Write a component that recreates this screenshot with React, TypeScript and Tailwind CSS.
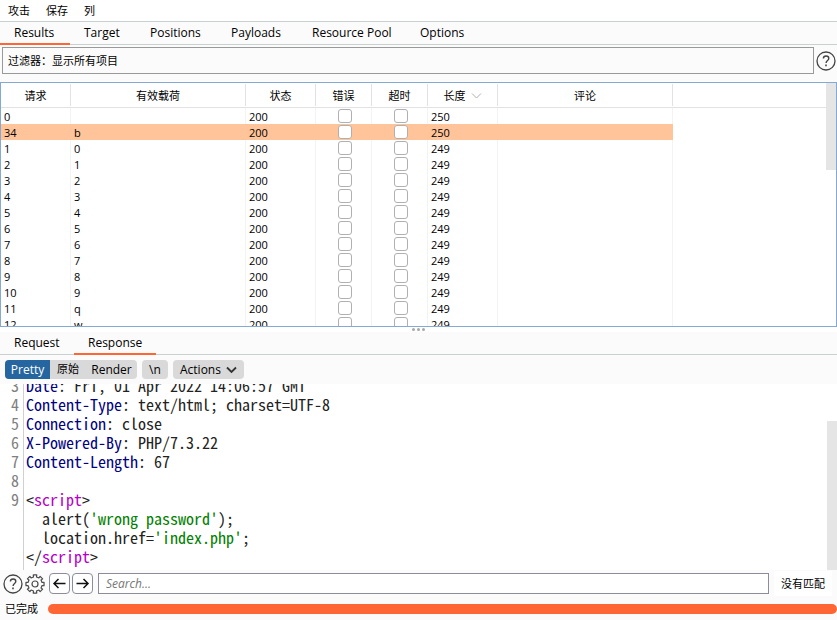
import React from "react";

type Row = { id: string; payload: string; length: string; selected?: boolean };

const rows: Row[] = [
  { id: "0", payload: "", length: "250" },
  { id: "34", payload: "b", length: "250", selected: true },
  { id: "1", payload: "0", length: "249" },
  { id: "2", payload: "1", length: "249" },
  { id: "3", payload: "2", length: "249" },
  { id: "4", payload: "3", length: "249" },
  { id: "5", payload: "4", length: "249" },
  { id: "6", payload: "5", length: "249" },
  { id: "7", payload: "6", length: "249" },
  { id: "8", payload: "7", length: "249" },
  { id: "9", payload: "8", length: "249" },
  { id: "10", payload: "9", length: "249" },
  { id: "11", payload: "q", length: "249" },
  { id: "12", payload: "w", length: "249" },
];

const mainTabs = [
  { label: "Results", width: "w-[70px]" },
  { label: "Target", width: "w-[66px]" },
  { label: "Positions", width: "w-[81px]" },
  { label: "Payloads", width: "w-[81px]" },
  { label: "Resource Pool", width: "w-[108px]" },
  { label: "Options", width: "w-[76px]" },
];

const messageTabs = [
  { label: "Request", width: "w-[74px]" },
  { label: "Response", width: "w-[82px]" },
];

function TabBar({ tabs, active }: { tabs: { label: string; width: string }[]; active: string }) {
  return (
    <div role="tablist" className="flex h-[23px] shrink-0 border-b border-[#c8d0d0] bg-[#fbfbfb] text-xs">
      {tabs.map((t) => (
        <button
          key={t.label}
          role="tab"
          aria-selected={t.label === active}
          className={`${t.width} -mb-px shrink-0 whitespace-nowrap border-b-2 pl-[14px] pt-px text-left leading-5 ${
            t.label === active ? "border-[#ff6633]" : "border-transparent"
          }`}
        >
          {t.label}
        </button>
      ))}
    </div>
  );
}

function HelpIcon() {
  return (
    <svg width="20" height="20" viewBox="0 0 20 20" fill="none" stroke="#444" aria-hidden="true">
      <circle cx="10" cy="10" r="9" strokeWidth="1.3" />
      <path d="M7.4 7.6C7.4 6 8.5 5 10.1 5s2.7 1 2.7 2.4c0 2-2.7 2.2-2.7 4.5" strokeWidth="1.4" />
      <path d="M10 13.6v1.6" strokeWidth="1.6" />
    </svg>
  );
}

const gearOutline =
  [0, 45, 90, 135, 180, 225, 270, 315]
    .flatMap((a) =>
      [
        [a - 12, 7.2],
        [a - 11, 9.2],
        [a + 11, 9.2],
        [a + 12, 7.2],
      ].map(([deg, r]) => {
        const t = (deg * Math.PI) / 180;
        return `${(10 + r * Math.cos(t)).toFixed(2)} ${(10 + r * Math.sin(t)).toFixed(2)}`;
      }),
    )
    .map((p, i) => (i === 0 ? `M${p}` : `L${p}`))
    .join("") + "Z";

function GearIcon() {
  return (
    <svg width="20" height="20" viewBox="0 0 20 20" fill="none" stroke="#4a4a4a" strokeWidth="1.2" strokeLinejoin="round" aria-hidden="true">
      <path d={gearOutline} />
      <circle cx="10" cy="10" r="3" />
    </svg>
  );
}

function ArrowIcon({ right }: { right?: boolean }) {
  return (
    <svg width="15" height="15" viewBox="0 0 15 15" fill="none" stroke="#111" strokeWidth="1.5" aria-hidden="true">
      {right ? <path d="M1.5 7.5H13M8.5 3L13 7.5L8.5 12" /> : <path d="M13.5 7.5H2M6.5 3L2 7.5L6.5 12" />}
    </svg>
  );
}

function Header({ name, value }: { name: string; value: string }) {
  return (
    <>
      <span className="text-[#000080]">{name}</span>: {value}
    </>
  );
}

function Tag({ name, close }: { name: string; close?: boolean }) {
  return (
    <>
      {close ? "</" : "<"}
      <span className="text-[#b400c8]">{name}</span>
      {">"}
    </>
  );
}

const code: { no: string; content: React.ReactNode }[] = [
  { no: "3", content: <Header name="Date" value="Fri, 01 Apr 2022 14:06:57 GMT" /> },
  { no: "4", content: <Header name="Content-Type" value="text/html; charset=UTF-8" /> },
  { no: "5", content: <Header name="Connection" value="close" /> },
  { no: "6", content: <Header name="X-Powered-By" value="PHP/7.3.22" /> },
  { no: "7", content: <Header name="Content-Length" value="67" /> },
  { no: "8", content: "" },
  { no: "9", content: <Tag name="script" /> },
  {
    no: "",
    content: (
      <>
        {"  alert("}
        <span className="text-[#008000]">'wrong password'</span>);
      </>
    ),
  },
  {
    no: "",
    content: (
      <>
        {"  location.href="}
        <span className="text-[#008000]">'index.php'</span>;
      </>
    ),
  },
  { no: "", content: <Tag name="script" close /> },
];

const check =
  "mx-auto block h-[14px] w-[14px] appearance-none rounded-[3px] border border-[#b0b0b0] bg-white";

export default function App() {
  return (
    <div className="flex h-screen min-h-0 flex-col overflow-hidden bg-[#fbfbfb] font-['Open_Sans','Noto_Sans_CJK_SC',sans-serif] text-[11px] text-black">
      <nav className="flex h-[22px] shrink-0 items-center gap-4 border-b border-[#c8d0d0] bg-white pl-2 pt-[2px]">
        <button>攻击</button>
        <button>保存</button>
        <button>列</button>
      </nav>
      <TabBar tabs={mainTabs} active="Results" />

      <div className="flex shrink-0 items-center gap-[2px] py-[2px] pl-[2px] pr-px">
        <button className="h-[27px] flex-1 border border-[#999] pl-[5px] pt-[2px] text-left">过滤器：显示所有项目</button>
        <button aria-label="帮助">
          <HelpIcon />
        </button>
      </div>

      <section className="mt-[6px] flex h-[245px] shrink-0 overflow-hidden border border-[#84aad4] bg-white">
        <div className="min-w-0 flex-1 overflow-hidden">
          <table className="w-full table-fixed border-separate border-spacing-0">
            <colgroup>
              <col className="w-[70px]" />
              <col className="w-[175px]" />
              <col className="w-[70px]" />
              <col className="w-[56px]" />
              <col className="w-[56px]" />
              <col className="w-[70px]" />
              <col className="w-[175px]" />
              <col />
            </colgroup>
            <thead>
              <tr>
                {["请求", "有效载荷", "状态", "错误", "超时", "长度", "评论"].map((h) => (
                  <th key={h} scope="col" className="border-b border-[#e2e2e2] p-0 pt-px font-normal">
                    <div className="mb-px flex h-[22px] items-center justify-center border-r border-[#e2e2e2] pt-[2px]">
                      {h}
                      {h === "长度" && (
                        <svg className="ml-[5px]" width="11" height="8" viewBox="0 0 11 8" fill="none" stroke="#b0b0b0" aria-hidden="true">
                          <path d="M1 1.5L5.5 6L10 1.5" />
                        </svg>
                      )}
                    </div>
                  </th>
                ))}
                <td className="border-b border-[#e2e2e2] p-0" />
              </tr>
            </thead>
            <tbody>
              {rows.map((r) => {
                const tone = r.selected ? "border-[#ffc499] bg-[#ffc499]" : "border-[#f3f3f3]";
                const cell = `h-4 border-r p-0 pl-[3px] pt-[2px] leading-[14px] ${tone}`;
                const boxCell = `h-4 border-r p-0 pl-[3px] ${tone}`;
                return (
                  <tr key={r.id}>
                    <td className={cell}>{r.id}</td>
                    <td className={cell}>{r.payload}</td>
                    <td className={cell}>200</td>
                    <td className={boxCell}>
                      <input type="checkbox" aria-label={`错误 ${r.id}`} className={check} />
                    </td>
                    <td className={boxCell}>
                      <input type="checkbox" aria-label={`超时 ${r.id}`} className={check} />
                    </td>
                    <td className={cell}>{r.length}</td>
                    <td className={cell} />
                    <td className="p-0" />
                  </tr>
                );
              })}
            </tbody>
          </table>
        </div>
        <div className="w-[10px] shrink-0">
          <div className="h-[87px] bg-[#e5e5e5]" />
        </div>
      </section>

      <div className="flex h-[5px] shrink-0 items-center justify-center gap-[2px] bg-white">
        <span className="h-[3px] w-[3px] rounded-full bg-[#a8a8a8]" />
        <span className="h-[3px] w-[3px] rounded-full bg-[#a8a8a8]" />
        <span className="h-[3px] w-[3px] rounded-full bg-[#a8a8a8]" />
      </div>

      <TabBar tabs={messageTabs} active="Response" />

      <div className="flex h-[29px] shrink-0 items-center gap-[5px] pl-[5px] text-xs">
        <div className="flex h-[19px] overflow-hidden rounded bg-[#d9d9d9]">
          <button className="w-[45px] bg-[#2666a0] text-white">Pretty</button>
          <button className="w-9 text-[11px]">原始</button>
          <button className="w-[51px]">Render</button>
        </div>
        <button className="h-[19px] w-[26px] rounded bg-[#d9d9d9]">\n</button>
        <button className="flex h-[19px] w-[71px] items-center justify-between rounded bg-[#d9d9d9] px-[7px]">
          Actions
          <svg width="11" height="8" viewBox="0 0 11 8" fill="none" stroke="#333" strokeWidth="1.8" aria-hidden="true">
            <path d="M1 1.5L5.5 6L10 1.5" />
          </svg>
        </button>
      </div>

      <section className="flex min-h-0 flex-1 overflow-hidden bg-white font-['Noto_Sans_Mono_CJK_SC','Liberation_Mono',monospace] text-[16px] leading-[19px] text-[#222]">
        <div className="-mt-2 flex min-w-0 flex-1 flex-col">
          {code.map((l, i) => (
            <div key={i} className="flex h-[19px] shrink-0">
              <span className="w-6 shrink-0 border-r border-[#d0d0d0] pr-1 text-right text-[#808080]">{l.no}</span>
              <pre className="pl-[2px] font-[inherit]">{l.content}</pre>
            </div>
          ))}
          <div className="w-6 flex-1 border-r border-[#d0d0d0]" />
        </div>
        <div className="flex w-[10px] shrink-0 flex-col justify-end">
          <div className="h-4/5 bg-[#e5e5e5]" />
        </div>
      </section>

      <div className="flex h-[27px] shrink-0 items-center gap-[2px] pl-[3px] pr-[5px]">
        <button aria-label="帮助">
          <HelpIcon />
        </button>
        <button aria-label="设置">
          <GearIcon />
        </button>
        <button aria-label="上一个" className="ml-[2px] flex h-[21px] w-[21px] items-center justify-center rounded border border-[#8c8c9c] bg-white">
          <ArrowIcon />
        </button>
        <button aria-label="下一个" className="flex h-[21px] w-[21px] items-center justify-center rounded border border-[#8c8c9c] bg-white">
          <ArrowIcon right />
        </button>
        <input
          type="text"
          aria-label="Search"
          placeholder="Search..."
          className="ml-[3px] h-[21px] min-w-0 flex-1 border border-[#8c8c9c] bg-white px-[7px] text-xs placeholder:italic placeholder:text-[#777]"
        />
        <span className="ml-[3px] flex h-[25px] w-[58px] items-center justify-center bg-white pt-[2px]">没有匹配</span>
      </div>

      <footer className="flex h-[23px] shrink-0 items-center gap-[10px] pl-[5px]">
        <label htmlFor="attack-progress" className="pt-[2px]">已完成</label>
        <progress
          id="attack-progress"
          value={100}
          max={100}
          className="h-[10px] min-w-0 flex-1 appearance-none overflow-hidden rounded-full [&::-webkit-progress-bar]:bg-[#e5e5e5] [&::-webkit-progress-value]:bg-[#ff6633]"
        />
      </footer>
    </div>
  );
}
